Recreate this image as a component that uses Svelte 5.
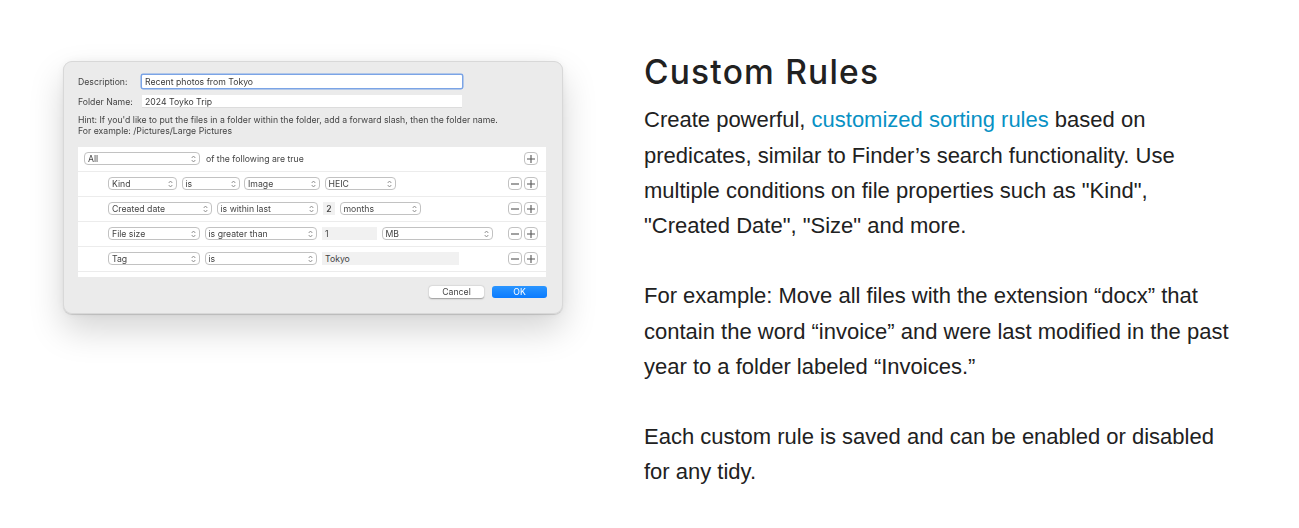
<script>
  const rows = [
    {
      fields: [
        { type: "select", label: "Kind", width: 69 },
        { type: "select", label: "is", width: 58 },
        { type: "select", label: "Image", width: 76 },
        { type: "select", label: "HEIC", width: 71 }
      ]
    },
    {
      fields: [
        { type: "select", label: "Created date", width: 104 },
        { type: "select", label: "is within last", width: 101 },
        { type: "box", label: "2", width: 12, center: true },
        { type: "select", label: "months", width: 81 }
      ]
    },
    {
      fields: [
        { type: "select", label: "File size", width: 92 },
        { type: "select", label: "is greater than", width: 112 },
        { type: "box", label: "1", width: 55 },
        { type: "select", label: "MB", width: 111 }
      ]
    },
    {
      fields: [
        { type: "select", label: "Tag", width: 92 },
        { type: "select", label: "is", width: 112 },
        { type: "box", label: "Tokyo", width: 137 }
      ]
    }
  ];
</script>

{#snippet chevrons()}
  <svg class="chev" width="5" height="8" viewBox="0 0 5 8" aria-hidden="true">
    <path d="M0.7 3 L2.5 1 L4.3 3 M0.7 5 L2.5 7 L4.3 5" fill="none" stroke="#777" stroke-width="0.8" />
  </svg>
{/snippet}

{#snippet plus()}
  <span class="step">
    <svg width="8" height="8" viewBox="0 0 8 8" aria-hidden="true">
      <path d="M4 0 V8 M0 4 H8" stroke="#555" stroke-width="1.1" />
    </svg>
  </span>
{/snippet}

{#snippet minus()}
  <span class="step">
    <svg width="8" height="8" viewBox="0 0 8 8" aria-hidden="true">
      <path d="M0 4 H8" stroke="#555" stroke-width="1.1" />
    </svg>
  </span>
{/snippet}

<main class="page">
  <section class="shot">
    <div class="dialog">
      <div class="line first">
        <span class="label">Description:</span>
        <span class="input focus">Recent photos from Tokyo</span>
      </div>
      <div class="line second">
        <span class="label">Folder Name:</span>
        <span class="input">2024 Toyko Trip</span>
      </div>
      <p class="hint">
        Hint: If you'd like to put the files in a folder within the folder, add a forward slash, then the folder name.<br />
        For example: /Pictures/Large Pictures
      </p>

      <div class="table">
        <div class="row head">
          <span class="select" style="width: 116px">All {@render chevrons()}</span>
          <span class="following">of the following are true</span>
          <span class="steps">{@render plus()}</span>
        </div>
        {#each rows as row}
          <div class="row">
            {#each row.fields as field}
              {#if field.type === "select"}
                <span class="select" style="width: {field.width}px">{field.label} {@render chevrons()}</span>
              {:else}
                <span class="box" class:center={field.center} style="width: {field.width}px">{field.label}</span>
              {/if}
            {/each}
            <span class="steps">{@render minus()}{@render plus()}</span>
          </div>
        {/each}
      </div>

      <div class="actions">
        <span class="btn">Cancel</span>
        <span class="btn ok">OK</span>
      </div>
    </div>
  </section>

  <section class="copy">
    <h2>Custom Rules</h2>
    <p>
      Create powerful, <a href="#rules">customized sorting rules</a> based on predicates, similar to Finder’s search
      functionality. Use multiple conditions on file properties such as "Kind", "Created Date", "Size" and more.
    </p>
    <p>
      For example: Move all files with the extension “docx” that contain the word “invoice” and were last modified in
      the past year to a folder labeled “Invoices.”
    </p>
    <p>Each custom rule is saved and can be enabled or disabled for any tidy.</p>
  </section>
</main>

<style>
  :global(body) {
    margin: 0;
    background: #fff;
  }

  .page {
    display: flex;
    height: 528px;
    padding: 0 0 0 63px;
    box-sizing: border-box;
    overflow: hidden;
    gap: 81px;
  }

  .shot {
    padding-top: 61px;
    flex: none;
  }

  .dialog {
    width: 500px;
    height: 253px;
    box-sizing: border-box;
    padding: 14px 16px 0 15px;
    background: #ebebeb;
    border-radius: 9px;
    box-shadow:
      inset 0 0 0 1px #d8d8d8,
      0 1px 1px rgba(0, 0, 0, 0.14),
      0 16px 34px rgba(0, 0, 0, 0.17),
      0 0 12px rgba(0, 0, 0, 0.05);
    font-family: Inter, "Liberation Sans", sans-serif;
    font-size: 8.7px;
    color: #444;
    filter: blur(0.3px);
  }

  .line {
    display: flex;
    align-items: center;
  }

  .second {
    margin-top: 7px;
  }

  .label {
    width: 64px;
    flex: none;
  }

  .input {
    width: 320px;
    height: 13px;
    line-height: 14px;
    box-sizing: border-box;
    padding-left: 3px;
    background: #fff;
    border-bottom: 1px solid #dcdcdc;
    color: #3a3a3a;
  }

  .focus {
    box-shadow: 0 0 0 1.5px #7ba4e6;
    border: 0;
    border-radius: 1px;
  }

  .hint {
    margin: 7px 0 0;
    line-height: 11px;
  }

  .table {
    margin-top: 10px;
    width: 468px;
    height: 130px;
    background: #fff;
  }

  .row {
    display: flex;
    align-items: center;
    gap: 4.5px;
    height: 25px;
    box-sizing: border-box;
    padding: 0 8px 1px 30px;
    border-bottom: 1px solid #ececec;
  }

  .head {
    padding-left: 6px;
  }

  .following {
    margin-left: 1.5px;
  }

  .select {
    display: flex;
    align-items: center;
    justify-content: space-between;
    flex: none;
    height: 13px;
    box-sizing: border-box;
    padding: 0 3px;
    border: 1px solid #c2c2c2;
    border-radius: 4px;
    background: #fff;
  }

  .chev {
    flex: none;
  }

  .box {
    flex: none;
    height: 13px;
    line-height: 14px;
    padding-left: 3px;
    box-sizing: border-box;
    margin-left: 1px;
    background: #f1f1f1;
  }

  .center {
    padding: 0;
    text-align: center;
    font-weight: 500;
  }

  .steps {
    margin-left: auto;
    display: flex;
    gap: 2px;
  }

  .step {
    display: flex;
    align-items: center;
    justify-content: center;
    width: 14px;
    height: 13px;
    box-sizing: border-box;
    border: 1px solid #c2c2c2;
    border-radius: 4px;
    background: #fff;
  }

  .actions {
    display: flex;
    justify-content: flex-end;
    gap: 8px;
    margin: 9px 0 0;
  }

  .btn {
    width: 55px;
    height: 12px;
    line-height: 12px;
    text-align: center;
    background: #fff;
    border-radius: 3px;
    box-shadow: 0 0.5px 1.5px rgba(0, 0, 0, 0.35);
  }

  .ok {
    background: linear-gradient(#2a95ff, #0a7bff);
    color: #fff;
    box-shadow: none;
  }

  .copy {
    width: 586px;
    flex: none;
    padding-top: 50px;
    font-family: "Liberation Sans", Arial, sans-serif;
    font-size: 22px;
    line-height: 35.2px;
    color: #212121;
  }

  h2 {
    margin: 0 0 8.4px;
    font-family: Inter, "Liberation Sans", sans-serif;
    font-size: 33.5px;
    font-weight: 500;
    line-height: 44px;
    letter-spacing: 1.2px;
    color: #212121;
  }

  .copy p {
    margin: 0 0 35.2px;
  }

  a {
    color: #0891c4;
    text-decoration: none;
  }
</style>
